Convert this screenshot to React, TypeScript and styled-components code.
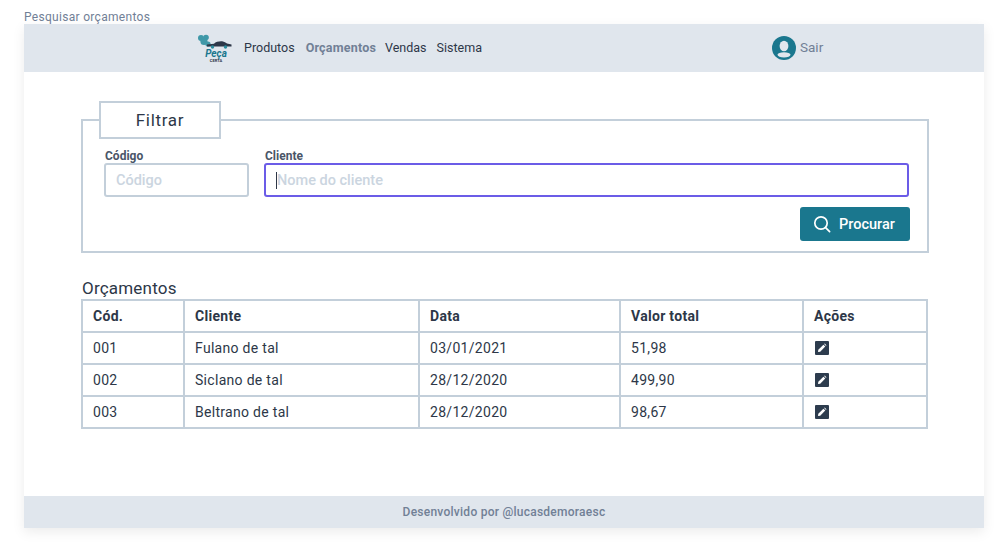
import styled, { createGlobalStyle } from "styled-components"

const GlobalStyle = createGlobalStyle`
	* {
		box-sizing: border-box;
	}
	body {
		margin: 0;
		background: #fff;
		font-family: "Roboto", "Liberation Sans", sans-serif;
		color: #2d3748;
	}
`

const Page = styled.div`
	width: 1008px;
	height: 552px;
	padding: 10px 24px 0;
	overflow: hidden;
`

const PageTitle = styled.div`
	height: 14px;
	font-size: 12px;
	line-height: 14px;
	letter-spacing: 0.3px;
	color: #718096;
`

const Card = styled.div`
	height: 504px;
	display: flex;
	flex-direction: column;
	background: #fff;
	box-shadow: 0 4px 12px rgba(0, 0, 0, 0.08);
`

const Header = styled.header`
	height: 48px;
	flex: none;
	display: flex;
	align-items: center;
	padding-left: 172px;
	background: #e0e6ed;
`

const Nav = styled.nav`
	display: flex;
	align-items: center;
	gap: 10px;
	margin-left: 12px;
	padding-bottom: 2px;
`

const NavItem = styled.a<{ $active?: boolean }>`
	font-size: 12.5px;
	font-weight: ${(p) => (p.$active ? 700 : 400)};
	letter-spacing: ${(p) => (p.$active ? "0.2px" : "0")};
	margin-left: ${(p) => (p.$active ? "1px" : "0")};
	margin-right: ${(p) => (p.$active ? "-1px" : "0")};
	color: ${(p) => (p.$active ? "#718096" : "#2d3748")};
`

const UserArea = styled.div`
	display: flex;
	align-items: center;
	gap: 4px;
	margin-left: 290px;
	font-size: 13.5px;
	color: #718096;
`

const UserLabel = styled.span`
	padding-bottom: 2px;
`

const Main = styled.main`
	flex: 1;
	padding: 47px 56px 0 57px;
`

const FilterBox = styled.section`
	position: relative;
	height: 134px;
	width: 848px;
	padding: 28px 18px 0 21px;
	border: 2px solid #c3cfda;
`

const FilterLegend = styled.div`
	position: absolute;
	left: 16px;
	top: -20px;
	width: 122px;
	height: 38px;
	display: flex;
	align-items: center;
	justify-content: center;
	background: #fff;
	border: 2px solid #c3cfda;
	font-size: 17px;
	letter-spacing: 0.7px;
`

const Fields = styled.div`
	display: flex;
	gap: 15px;
`

const Field = styled.label<{ $grow?: boolean }>`
	display: flex;
	flex-direction: column;
	flex: ${(p) => (p.$grow ? 1 : "none")};
	width: ${(p) => (p.$grow ? "auto" : "145px")};
`

const FieldLabel = styled.span`
	height: 12px;
	margin: 1px 0 0 1px;
	font-size: 12px;
	line-height: 12px;
	font-weight: 700;
	color: #4a5568;
`

const FakeInput = styled.div<{ $focused?: boolean }>`
	height: 34px;
	margin-top: 1px;
	display: flex;
	align-items: center;
	padding-left: 10px;
	border: 2px solid ${(p) => (p.$focused ? "#6b5ce7" : "#c3cfda")};
	border-radius: 3px;
	font-size: 14.5px;
	font-weight: 500;
	color: #cbd5e0;
`

const Caret = styled.span`
	width: 1px;
	height: 17px;
	background: #2d3748;
`

const Actions = styled.div`
	display: flex;
	justify-content: flex-end;
	margin-top: 10px;
`

const SearchButton = styled.button`
	width: 110px;
	height: 34px;
	display: flex;
	align-items: center;
	justify-content: center;
	gap: 8px;
	margin-right: -1px;
	padding: 0 2px 0 0;
	border: 0;
	border-radius: 3px;
	background: #1a778e;
	color: #fff;
	font-family: inherit;
	font-size: 14.5px;
	font-weight: 500;
`

const SectionTitle = styled.h2`
	height: 21px;
	margin: 25px 0 0 1px;
	font-size: 17px;
	line-height: 20px;
	font-weight: 400;
	letter-spacing: 0.2px;
`

const Table = styled.table`
	width: 845px;
	border-collapse: collapse;
	table-layout: fixed;
	border: 2px solid #c3cfda;
	font-size: 14px;
	letter-spacing: 0.3px;
`

const Th = styled.th<{ $w: number }>`
	width: ${(p) => p.$w}px;
	height: 32px;
	padding: 0 0 0 10px;
	border: 2px solid #c3cfda;
	text-align: left;
	font-weight: 700;
`

const Td = styled.td`
	height: 32px;
	padding: 0 0 0 10px;
	border: 2px solid #c3cfda;
`

const EditIcon = styled.svg`
	display: block;
	margin-left: 1px;
`

const Footer = styled.footer`
	height: 32px;
	flex: none;
	display: flex;
	align-items: center;
	justify-content: center;
	background: #e0e6ed;
	font-size: 12px;
	font-weight: 500;
	letter-spacing: 0.25px;
	color: #718096;
`

const rows = [
	{ id: "001", cliente: "Fulano de tal", data: "03/01/2021", valor: "51,98" },
	{ id: "002", cliente: "Siclano de tal", data: "28/12/2020", valor: "499,90" },
	{ id: "003", cliente: "Beltrano de tal", data: "28/12/2020", valor: "98,67" },
]

function Logo() {
	return (
		<svg width="36" height="34" viewBox="0 0 36 34">
			<g fill="#3f98a8">
				<circle cx="5" cy="7" r="3" />
				<circle cx="10" cy="6.5" r="2.8" />
				<circle cx="8" cy="10.5" r="3.6" />
				<circle cx="12" cy="13" r="2.6" />
			</g>
			<path d="M11 13.5 L18 12.8 C20 10.5 24 10 27 10.4 C29 10.8 30 12 31 12.4 L35.5 13.5 L35.5 15.5 L11 15.5 Z" fill="#2d3748" />
			<circle cx="16.5" cy="16" r="1.7" fill="#2a8a9c" />
			<circle cx="29.5" cy="16" r="1.7" fill="#2a8a9c" />
			<text x="20" y="26" textAnchor="middle" fontSize="10" fontWeight="700" fontStyle="italic" fill="#1a778e" fontFamily="Roboto, sans-serif">Peça</text>
			<text x="20" y="31" textAnchor="middle" fontSize="4" fontWeight="700" fill="#2d3748" fontFamily="Roboto, sans-serif">CERTA</text>
		</svg>
	)
}

function UserIcon() {
	return (
		<svg width="24" height="24" viewBox="0 0 24 24">
			<circle cx="12" cy="12" r="12" fill="#1a778e" />
			<ellipse cx="12" cy="10" rx="4.4" ry="5.2" fill="#e0e6ed" />
			<ellipse cx="12" cy="18.8" rx="6.5" ry="2.6" fill="#e0e6ed" />
		</svg>
	)
}

function SearchIcon() {
	return (
		<svg width="18" height="18" viewBox="0 0 18 18" fill="none" stroke="#fff" strokeWidth="1.7" strokeLinecap="round">
			<circle cx="8" cy="8" r="6.2" />
			<path d="M12.6 12.6 L16.6 16.6" />
		</svg>
	)
}

function PencilBox() {
	return (
		<EditIcon width="14" height="14" viewBox="0 0 14 14">
			<rect width="14" height="14" rx="1" fill="#2d3c4e" />
			<path d="M3 11 L3.3 8.8 L8.4 3.7 L10.3 5.6 L5.2 10.7 Z M9.1 3 L9.8 2.6 L11.4 4.2 L11 4.9 Z" fill="#fff" />
		</EditIcon>
	)
}

function App() {
	return (
		<Page>
			<GlobalStyle />
			<PageTitle>Pesquisar orçamentos</PageTitle>
			<Card>
				<Header>
					<Logo />
					<Nav>
						<NavItem>Produtos</NavItem>
						<NavItem $active>Orçamentos</NavItem>
						<NavItem>Vendas</NavItem>
						<NavItem>Sistema</NavItem>
					</Nav>
					<UserArea>
						<UserIcon />
						<UserLabel>Sair</UserLabel>
					</UserArea>
				</Header>
				<Main>
					<FilterBox>
						<FilterLegend>Filtrar</FilterLegend>
						<Fields>
							<Field>
								<FieldLabel>Código</FieldLabel>
								<FakeInput>Código</FakeInput>
							</Field>
							<Field $grow>
								<FieldLabel>Cliente</FieldLabel>
								<FakeInput $focused>
									<Caret />
									Nome do cliente
								</FakeInput>
							</Field>
						</Fields>
						<Actions>
							<SearchButton>
								<SearchIcon />
								Procurar
							</SearchButton>
						</Actions>
					</FilterBox>
					<SectionTitle>Orçamentos</SectionTitle>
					<Table>
						<thead>
							<tr>
								<Th $w={102}>Cód.</Th>
								<Th $w={235}>Cliente</Th>
								<Th $w={201}>Data</Th>
								<Th $w={183}>Valor total</Th>
								<Th $w={124}>Ações</Th>
							</tr>
						</thead>
						<tbody>
							{rows.map((row) => (
								<tr key={row.id}>
									<Td>{row.id}</Td>
									<Td>{row.cliente}</Td>
									<Td>{row.data}</Td>
									<Td>{row.valor}</Td>
									<Td><PencilBox /></Td>
								</tr>
							))}
						</tbody>
					</Table>
				</Main>
				<Footer>Desenvolvido por @lucasdemoraesc</Footer>
			</Card>
		</Page>
	)
}

export default App
